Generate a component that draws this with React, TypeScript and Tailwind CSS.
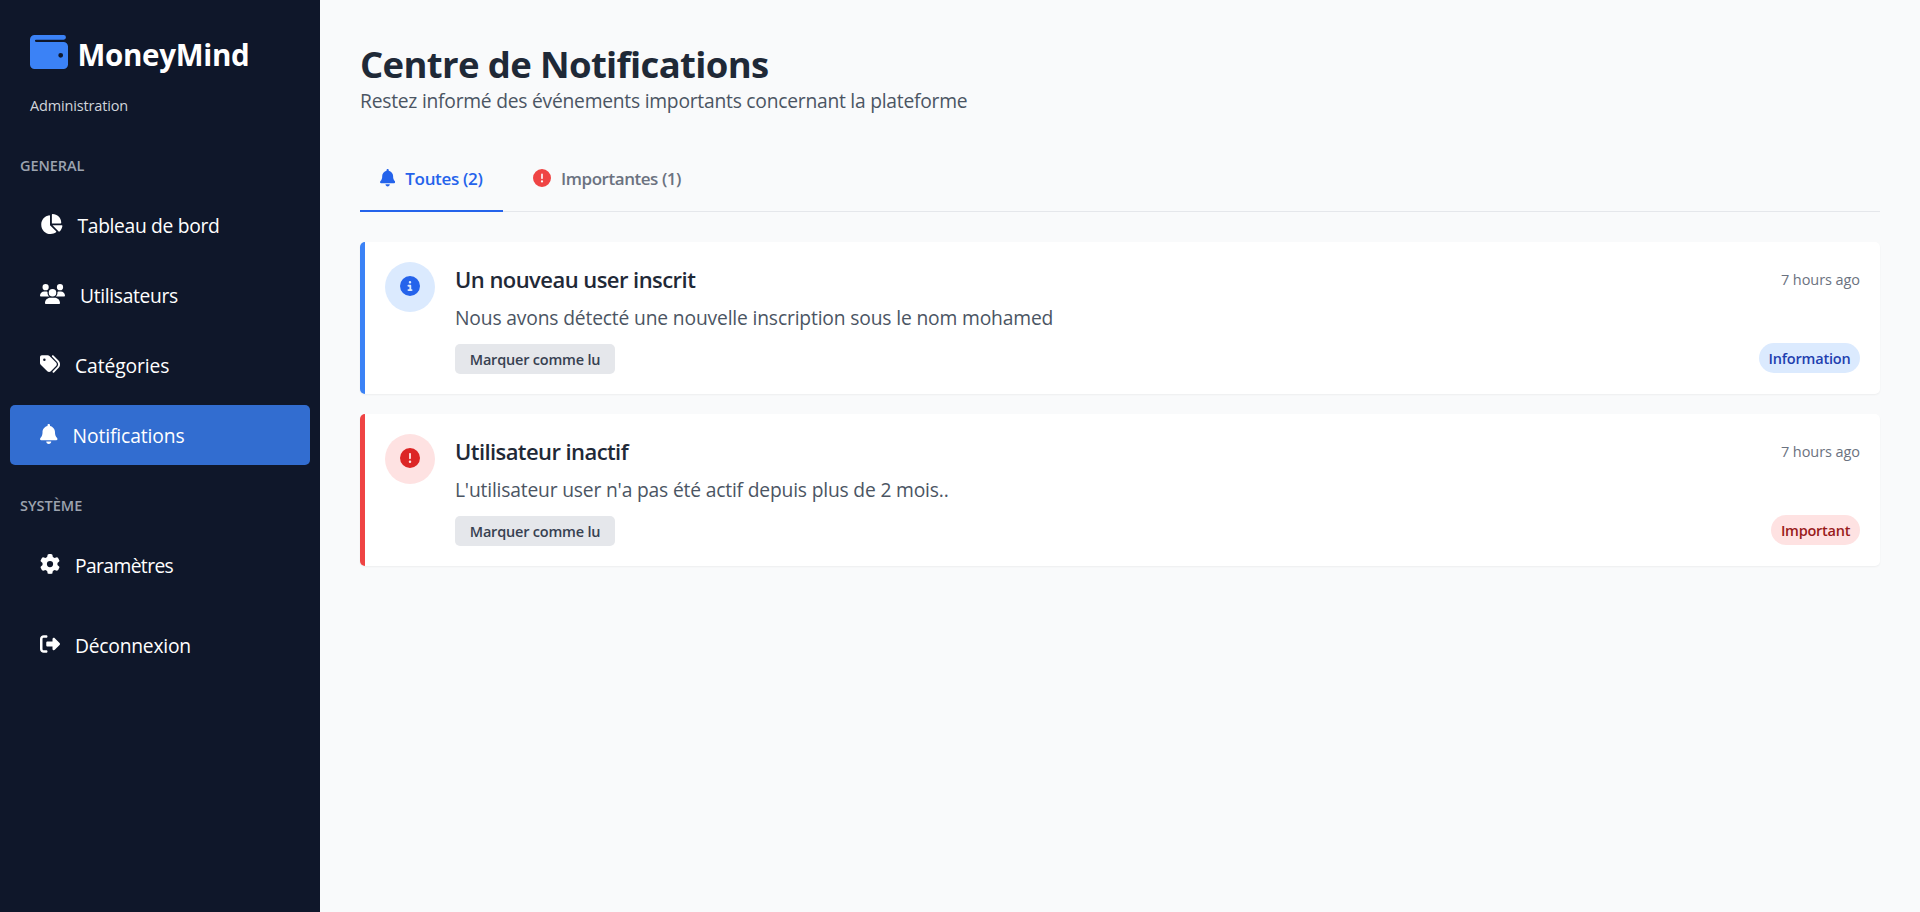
import type { ReactNode } from "react";
import type { IconType } from "react-icons";
import {
  FaBell,
  FaChartPie,
  FaCircleExclamation,
  FaCircleInfo,
  FaGear,
  FaRightFromBracket,
  FaTags,
  FaUsers,
} from "react-icons/fa6";

function WalletLogo({ className }: { className?: string }) {
  return (
    <svg viewBox="0 0 38 34" fill="currentColor" fillRule="evenodd" className={className} aria-hidden="true">
      <path d="M4.6 0H33.6a2.3 2.3 0 0 1 0 4.7H6a1.05 1.05 0 0 0 0 2.2H33.4A4.6 4.6 0 0 1 38 11.5V29.4A4.6 4.6 0 0 1 33.4 34H4.6A4.6 4.6 0 0 1 0 29.4V4.6A4.6 4.6 0 0 1 4.6 0ZM30.7 17.9a2.4 2.4 0 1 0 0 4.8a2.4 2.4 0 0 0 0-4.8Z" />
    </svg>
  );
}

function NavItem({
  icon: Icon,
  iconClass,
  labelClass,
  active,
  children,
}: {
  icon: IconType;
  iconClass: string;
  labelClass: string;
  active?: boolean;
  children: ReactNode;
}) {
  return (
    <a
      className={`flex h-[60px] items-center gap-[15px] rounded-[5px] px-[30px] text-white ${
        active ? "bg-[#326dd0]" : ""
      }`}
    >
      <Icon className={`-mt-[2px] h-5 shrink-0 ${iconClass}`} />
      <span className={`pt-[2px] text-[19.25px] leading-7 ${labelClass}`}>{children}</span>
    </a>
  );
}

interface Notification {
  icon: IconType;
  title: string;
  titleClass: string;
  message: string;
  messageClass: string;
  borderClass: string;
  circleClass: string;
  badge: string;
  badgeClass: string;
}

const notifications: Notification[] = [
  {
    icon: FaCircleInfo,
    title: "Un nouveau user inscrit",
    titleClass: "tracking-[-0.55px]",
    message: "Nous avons détecté une nouvelle inscription sous le nom mohamed",
    messageClass: "tracking-[-0.16px]",
    borderClass: "border-l-[#3b82f6]",
    circleClass: "bg-[#dbeafe] text-[#2563eb]",
    badge: "Information",
    badgeClass: "w-[101px] tracking-[-0.2px] bg-[#dbeafe] text-[#1e40af]",
  },
  {
    icon: FaCircleExclamation,
    title: "Utilisateur inactif",
    titleClass: "tracking-[-0.58px]",
    message: "L'utilisateur user n'a pas été actif depuis plus de 2 mois..",
    messageClass: "tracking-[-0.18px]",
    borderClass: "border-l-[#ef4444]",
    circleClass: "bg-[#fee2e2] text-[#dc2626]",
    badge: "Important",
    badgeClass: "w-[89px] tracking-[-0.25px] bg-[#fee2e2] text-[#991b1b]",
  },
];

function NotificationCard({ item }: { item: Notification }) {
  const Icon = item.icon;
  return (
    <article
      className={`flex h-[152px] gap-5 rounded-[5px] border-l-[5px] bg-white p-5 shadow-[0_1px_2px_0_rgba(0,0,0,0.05)] ${item.borderClass}`}
    >
      <div className={`flex size-[50px] shrink-0 items-center justify-center rounded-full pb-[2px] ${item.circleClass}`}>
        <Icon className="size-5" />
      </div>
      <div className="flex-1">
        <div className="flex h-[35px] items-center justify-between">
          <h3 className={`text-[22px] font-semibold text-[#1f2937] ${item.titleClass}`}>{item.title}</h3>
          <span className="text-[14.5px] tracking-[-0.07px] text-[#6b7280]">7 hours ago</span>
        </div>
        <p className={`mt-[7px] text-[19.25px] leading-7 text-[#4b5563] ${item.messageClass}`}>{item.message}</p>
        <div className="mt-[11px] flex items-start justify-between">
          <button className="mt-px h-[30px] w-[160px] rounded-[5px] bg-[#e5e7eb] pt-[2px] text-[14.5px] font-semibold tracking-[-0.2px] text-[#374151]">
            Marquer comme lu
          </button>
          <span
            className={`flex h-[30px] items-center justify-center rounded-full pt-[2px] text-[14.5px] font-semibold ${item.badgeClass}`}
          >
            {item.badge}
          </span>
        </div>
      </div>
    </article>
  );
}

export default function App() {
  return (
    <div className="flex h-[912px] w-full overflow-hidden bg-[#f9fafb] font-['Open_Sans','Noto_Sans',sans-serif]">
      <aside className="w-[320px] shrink-0 bg-[#0f172a] px-[10px]">
        <div className="px-5 pt-[33px]">
          <div className="flex h-[43px] items-start gap-[9.5px]">
            <WalletLogo className="mt-[2px] h-[34px] w-[38px] shrink-0 text-[#3b82f6]" />
            <span className="pt-px text-[29.5px] leading-[42px] font-bold tracking-[-0.3px] text-white">
              MoneyMind
            </span>
          </div>
          <p className="mt-5 text-[14.5px] leading-5 tracking-[-0.15px] text-[#d1d5db]">Administration</p>
        </div>

        <h2 className="mt-10 px-[10px] text-[14.5px] leading-5 font-semibold tracking-[-0.05px] text-[#9ca3af]">
          GENERAL
        </h2>
        <nav className="mt-[19px] flex flex-col gap-[10px]">
          <NavItem icon={FaChartPie} iconClass="w-[22.5px]" labelClass="tracking-[-0.33px]">
            Tableau de bord
          </NavItem>
          <NavItem icon={FaUsers} iconClass="w-[25px]" labelClass="tracking-[-0.33px]">
            Utilisateurs
          </NavItem>
          <NavItem icon={FaTags} iconClass="w-5" labelClass="tracking-[-0.08px]">
            Catégories
          </NavItem>
          <NavItem icon={FaBell} iconClass="w-[17.5px]" labelClass="tracking-[-0.09px]" active>
            Notifications
          </NavItem>
        </nav>

        <h2 className="mt-[31px] px-[10px] text-[14.5px] leading-5 font-semibold text-[#9ca3af]">SYSTÈME</h2>
        <nav className="mt-[19px] flex flex-col gap-5">
          <NavItem icon={FaGear} iconClass="w-5" labelClass="tracking-[-0.6px]">
            Paramètres
          </NavItem>
          <NavItem icon={FaRightFromBracket} iconClass="w-5" labelClass="tracking-[-0.22px]">
            Déconnexion
          </NavItem>
        </nav>
      </aside>

      <main className="flex-1 p-10">
        <h1 className="text-[36.5px] leading-[48px] font-bold tracking-[-0.65px] text-[#1f2937]">
          Centre de Notifications
        </h1>
        <p className="text-[19.25px] leading-[25px] tracking-[-0.24px] text-[#4b5563]">
          Restez informé des événements importants concernant la plateforme
        </p>

        <div className="mt-[33px] flex h-[66px] gap-[10px] border-b border-[#e5e7eb]">
          <button className="flex h-[66px] w-[143px] items-center gap-[10px] border-b-2 border-[#2563eb] pl-5 text-[17px] font-semibold tracking-[-0.32px] whitespace-nowrap text-[#2563eb]">
            <FaBell className="h-[17.5px] w-[15.3px] shrink-0" />
            <span className="pt-[2px]">Toutes (2)</span>
          </button>
          <button className="flex h-[66px] items-center gap-[10px] border-b-2 border-transparent px-5 text-[17px] font-semibold tracking-[-0.45px] whitespace-nowrap text-[#6b7280]">
            <FaCircleExclamation className="size-[18px] shrink-0 text-[#ef4444]" />
            <span className="pt-[2px]">Importantes (1)</span>
          </button>
        </div>

        <div className="mt-[30px] flex flex-col gap-5">
          {notifications.map((item) => (
            <NotificationCard key={item.title} item={item} />
          ))}
        </div>
      </main>
    </div>
  );
}
